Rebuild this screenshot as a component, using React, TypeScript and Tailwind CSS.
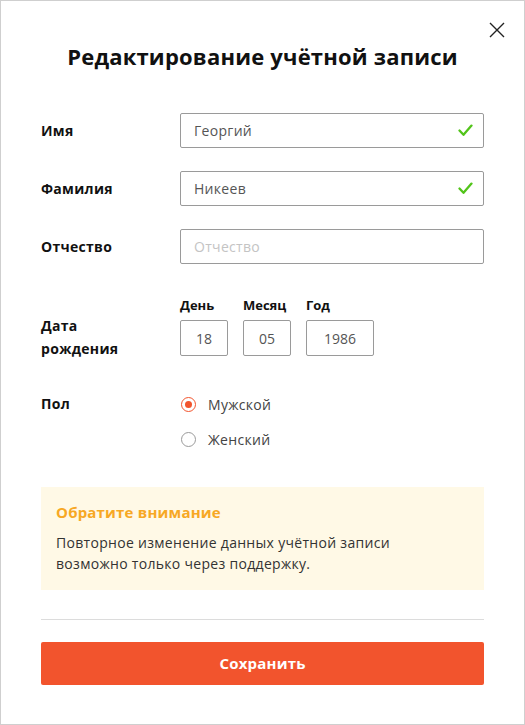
import React, { useState } from 'react';

const font = { fontFamily: '"Open Sans", "Noto Sans", sans-serif' };

function Check() {
  return (
    <svg width="15" height="13" viewBox="0 0 15 13" className="absolute right-[11px] top-[11px]">
      <path d="M1.5 6.5 L5.5 10.8 L13.5 1.6" fill="none" stroke="#52c41a" strokeWidth="2.3" strokeLinecap="round" strokeLinejoin="round" />
    </svg>
  );
}

function TextRow({ label, value, placeholder }: { label: string; value?: string; placeholder: string }) {
  return (
    <div className="flex items-center h-[35px]">
      <div className="w-[139px] text-[14px] font-bold text-[#111] tracking-[0.3px]">{label}</div>
      <div className="relative flex-1 h-full">
        <input
          defaultValue={value}
          placeholder={placeholder}
          className="w-full h-full border border-[#9a9a9a] rounded-[2px] pl-[13px] pr-[36px] text-[14px] text-[#555] tracking-[0.3px] placeholder:text-[#c4c4c4] outline-none"
          style={font}
        />
        {value && <Check />}
      </div>
    </div>
  );
}

function Radio({ checked, label, onClick }: { checked: boolean; label: string; onClick: () => void }) {
  return (
    <button className="flex items-center h-[20px] gap-[12px]" onClick={onClick}>
      <span
        className={`w-[15px] h-[15px] rounded-full border flex items-center justify-center ${
          checked ? 'border-[#f2542d]' : 'border-[#9a9a9a]'
        }`}
      >
        {checked && <span className="w-[7px] h-[7px] rounded-full bg-[#f2542d]" />}
      </span>
      <span className="text-[14px] text-[#444] tracking-[0.3px]">{label}</span>
    </button>
  );
}

export default function App() {
  const [gender, setGender] = useState('m');

  return (
    <div className="w-[525px] h-[725px] bg-white border border-[#cfcfcf] relative text-[#111]" style={font}>
      {/* Close */}
      <button className="absolute right-[19px] top-[21px] w-[16px] h-[16px]">
        <svg width="16" height="16" viewBox="0 0 16 16">
          <path d="M1 1 L15 15 M15 1 L1 15" stroke="#222" strokeWidth="1.4" />
        </svg>
      </button>

      <div className="px-[40px] pt-[41px]">
        <h1 className="text-center text-[22px] font-bold leading-[28px] tracking-[0.2px]">
          Редактирование учётной записи
        </h1>

        <div className="mt-[43px] flex flex-col gap-[23px]">
          <TextRow label="Имя" value="Георгий" placeholder="Имя" />
          <TextRow label="Фамилия" value="Никеев" placeholder="Фамилия" />
          <TextRow label="Отчество" placeholder="Отчество" />
        </div>

        {/* Date */}
        <div className="mt-[33px] flex items-end">
          <div className="w-[139px] text-[14px] font-bold leading-[23px] mb-[-4px] tracking-[0.3px]">
            Дата
            <br />
            рождения
          </div>
          <div className="flex gap-[15px]">
            {[
              ['День', '18', 'w-[48px]'],
              ['Месяц', '05', 'w-[48px]'],
              ['Год', '1986', 'w-[68px]'],
            ].map(([l, v, w]) => (
              <div key={l} className="flex flex-col">
                <span className="text-[13px] font-bold leading-[16px] mb-[7px]">{l}</span>
                <input
                  defaultValue={v}
                  className={`${w} h-[36px] border border-[#9a9a9a] rounded-[2px] text-center text-[14px] text-[#555] outline-none`}
                  style={font}
                />
              </div>
            ))}
          </div>
        </div>

        {/* Gender */}
        <div className="mt-[38px] flex">
          <div className="w-[139px] text-[14px] font-bold leading-[20px] tracking-[0.3px]">Пол</div>
          <div className="flex flex-col gap-[15px] pl-[1px]">
            <Radio checked={gender === 'm'} label="Мужской" onClick={() => setGender('m')} />
            <Radio checked={gender === 'f'} label="Женский" onClick={() => setGender('f')} />
          </div>
        </div>

        {/* Notice */}
        <div className="mt-[38px] bg-[#fff9e6] px-[15px] pt-[14px] pb-[16px]">
          <div className="text-[15px] font-bold text-[#f7a824] leading-[22px] tracking-[0.2px]">Обратите внимание</div>
          <p className="mt-[9px] text-[14px] text-[#333] leading-[21px] tracking-[0.3px]">
            Повторное изменение данных учётной записи
            <br />
            возможно только через поддержку.
          </p>
        </div>

        <div className="mt-[29px] h-px bg-[#dcdcdc]" />

        <button className="mt-[22px] w-full h-[43px] bg-[#f2542d] rounded-[2px] text-white text-[15px] font-bold tracking-[0.2px]">
          Сохранить
        </button>
      </div>
    </div>
  );
}
